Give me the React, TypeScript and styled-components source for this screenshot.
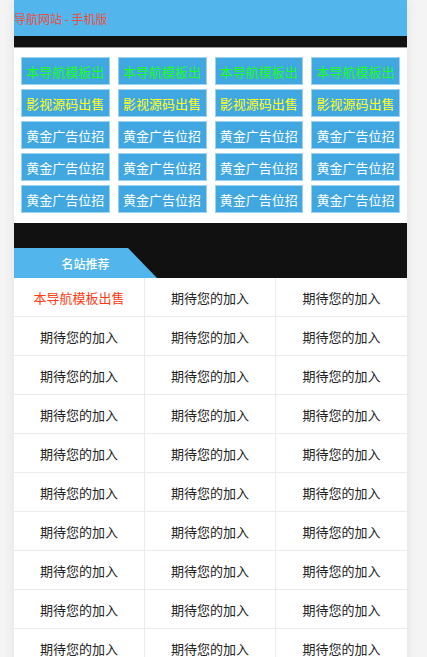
import * as React from 'react';
import styled, { createGlobalStyle } from 'styled-components';

const GlobalStyle = createGlobalStyle`
  html, body {
    margin: 0;
    padding: 0;
    background: #f4f4f4;
    font-family: 'Noto Sans CJK SC', 'Noto Sans', sans-serif;
  }
`;

type Ad = { text: string; tone: 'green' | 'yellow' | 'white' };

const ads: Ad[] = [
  ...Array(4).fill({ text: '本导航模板出', tone: 'green' }),
  ...Array(4).fill({ text: '影视源码出售', tone: 'yellow' }),
  ...Array(12).fill({ text: '黄金广告位招', tone: 'white' }),
];

const sites: string[] = ['本导航模板出售', ...Array(35).fill('期待您的加入')];

const toneColor = {
  green: '#19ff19',
  yellow: '#ffff1a',
  white: '#ffffff',
};

const App: React.FC = () => {
  return (
    <>
      <GlobalStyle />
      <Page>
        <Header>导航网站 - 手机版</Header>
        <DarkBar />
        <AdGrid>
          {ads.map((ad, i) => (
            <AdButton key={i} $tone={ad.tone}>
              {ad.text}
            </AdButton>
          ))}
        </AdGrid>
        <SectionHead>
          <Tab>名站推荐</Tab>
        </SectionHead>
        <SiteTable>
          {sites.map((s, i) => (
            <SiteCell key={i} $hot={i === 0}>
              {s}
            </SiteCell>
          ))}
        </SiteTable>
      </Page>
    </>
  );
};

export default App;

const Page = styled.div`
  margin-left: 14px;
  width: 393px;
  background: #fff;
  box-shadow: 0 0 12px rgba(0, 0, 0, 0.08);
  min-height: 700px;
`;

const Header = styled.div`
  height: 36px;
  line-height: 38px;
  background: #52b6ec;
  color: #e8503f;
  font-size: 12px;
  white-space: pre;
`;

const DarkBar = styled.div`
  height: 11px;
  background: #111;
  border-bottom: 1px solid #9a9a9a;
`;

const AdGrid = styled.div`
  display: grid;
  grid-template-columns: repeat(4, 1fr);
  gap: 4px 8px;
  padding: 9px 7px 10px;
`;

const AdButton = styled.div<{ $tone: Ad['tone'] }>`
  height: 28px;
  box-sizing: border-box;
  border: 1px solid #9ad3f1;
  background: #41a7e0;
  color: ${(p) => toneColor[p.$tone]};
  font-size: 13px;
  display: flex;
  align-items: center;
  justify-content: center;
  overflow: hidden;
  white-space: nowrap;
`;

const SectionHead = styled.div`
  height: 55px;
  background: #111;
  display: flex;
  align-items: flex-end;
`;

const Tab = styled.div`
  width: 143px;
  height: 30px;
  background: #52b6ec;
  clip-path: polygon(0 0, 114px 0, 143px 100%, 0 100%);
  color: #fff;
  font-size: 12px;
  font-weight: 500;
  display: flex;
  align-items: center;
  justify-content: center;
`;

const SiteTable = styled.div`
  display: grid;
  grid-template-columns: repeat(3, 1fr);
`;

const SiteCell = styled.div<{ $hot: boolean }>`
  height: 39px;
  box-sizing: border-box;
  border-bottom: 1px solid #ebebeb;
  border-right: 1px solid #ebebeb;
  display: flex;
  align-items: center;
  justify-content: center;
  font-size: 13px;
  color: ${(p) => (p.$hot ? '#ff3a14' : '#222')};

  &:nth-child(3n) {
    border-right: none;
  }
`;
